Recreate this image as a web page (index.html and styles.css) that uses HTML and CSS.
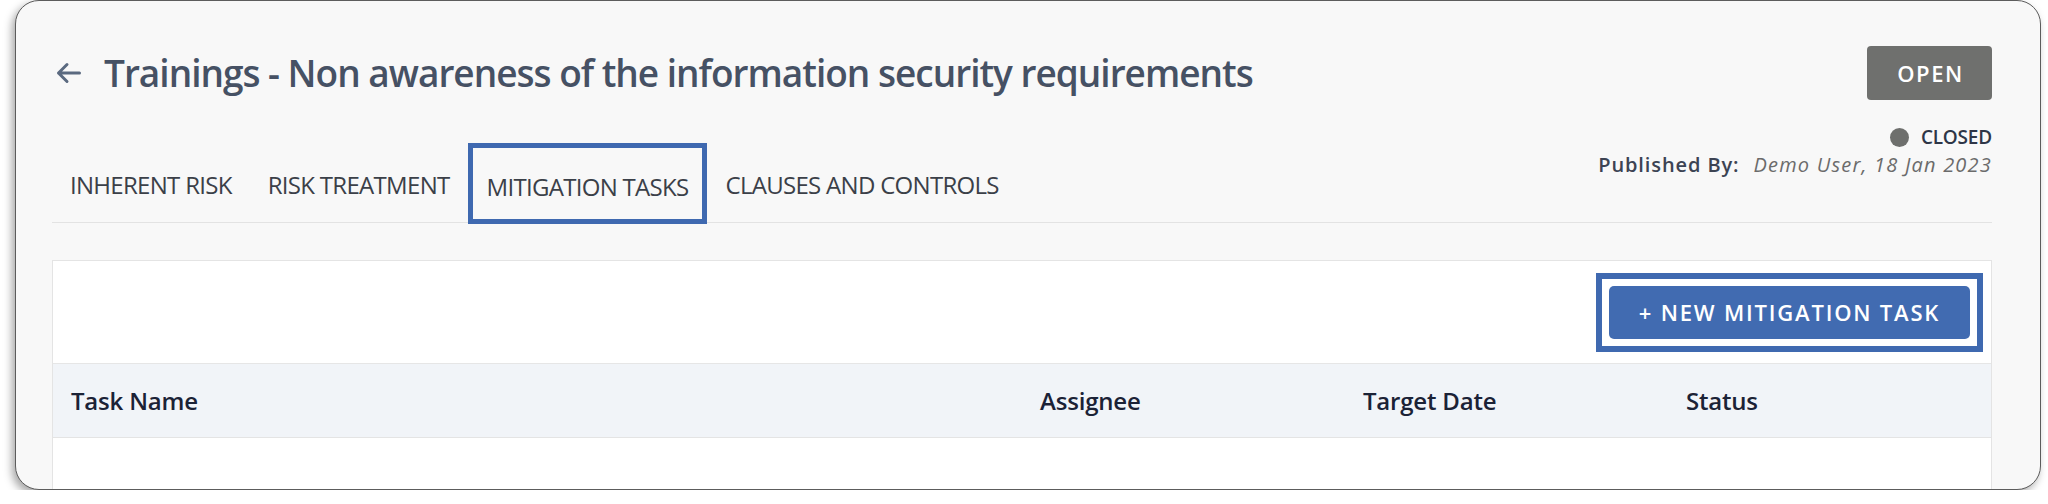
FILE: index.html
```html
<!DOCTYPE html>
<html lang="en">
<head>
<meta charset="utf-8">
<title>Risk - Mitigation Tasks</title>
<link rel="stylesheet" href="styles.css">
</head>
<body>
<div class="card">
  <header class="head">
    <div class="head-left">
      <div class="title-row">
        <svg class="back" viewBox="0 0 26 22" aria-hidden="true">
          <path d="M24.5 11H3.5M12 2.5L3.5 11L12 19.5" fill="none" stroke="currentColor" stroke-width="3" stroke-linecap="round" stroke-linejoin="round"/>
        </svg>
        <h1 class="title">Trainings - Non awareness of the information security requirements</h1>
      </div>
      <nav class="tabs">
        <div class="tab">INHERENT RISK</div>
        <div class="tab">RISK TREATMENT</div>
        <div class="tab tab-active">MITIGATION TASKS</div>
        <div class="tab">CLAUSES AND CONTROLS</div>
      </nav>
    </div>
    <div class="head-right">
      <button class="open-btn">OPEN</button>
      <div class="status"><span class="dot"></span><span class="status-text">CLOSED</span></div>
      <div class="published"><span class="pub-label">Published By:</span><span class="pub-value">Demo User, 18 Jan 2023</span></div>
    </div>
  </header>

  <section class="panel">
    <div class="toolbar">
      <div class="highlight">
        <button class="new-btn">+ NEW MITIGATION TASK</button>
      </div>
    </div>
    <div class="thead">
      <div class="th">Task Name</div>
      <div class="th">Assignee</div>
      <div class="th">Target Date</div>
      <div class="th">Status</div>
    </div>
    <div class="tbody"></div>
  </section>
</div>
</body>
</html>
```

FILE: styles.css
```css
html, body {
  margin: 0;
  padding: 0;
  background: #ffffff;
}

body {
  font-family: "Open Sans", "Noto Sans", "Liberation Sans", sans-serif;
}

.card {
  box-sizing: border-box;
  margin-left: 15px;
  width: 2026px;
  height: 490px;
  border: 1px solid #5c5c5c;
  border-radius: 24px;
  background: #f8f8f8;
  box-shadow: -3px 4px 8px rgba(0, 0, 0, 0.35);
  overflow: hidden;
  padding: 0 48px 0 36px;
}

.head {
  display: flex;
  justify-content: space-between;
  align-items: flex-start;
  border-bottom: 1px solid #e3e3e3;
}

.head-left {
  padding-top: 47px;
}

.title-row {
  display: flex;
  align-items: center;
  height: 50px;
}

.back {
  width: 26px;
  height: 22px;
  color: #5b6a80;
  margin-left: 3px;
  margin-right: 23px;
  flex: none;
}

.title {
  margin: 0;
  font-size: 37px;
  line-height: 50px;
  font-weight: 600;
  letter-spacing: -1px;
  color: #465164;
  white-space: nowrap;
}

.tabs {
  display: flex;
  height: 79px;
  margin-top: 45px;
}

.tab {
  box-sizing: border-box;
  display: flex;
  align-items: center;
  padding: 4px 18px 0;
  height: 79px;
  font-size: 24px;
  letter-spacing: -0.7px;
  color: #3b4048;
  white-space: nowrap;
}

.tab-active {
  height: 81px;
  margin-bottom: -2px;
  padding: 6px 14px 0;
  border: 5px solid #3f69b0;
}

.head-right {
  padding-top: 45px;
  display: flex;
  flex-direction: column;
  align-items: flex-end;
}

.open-btn {
  box-sizing: border-box;
  width: 125px;
  height: 54px;
  border: 0;
  border-radius: 4px;
  background: #6f706e;
  color: #ffffff;
  font-family: inherit;
  font-size: 22px;
  font-weight: 600;
  letter-spacing: 1.6px;
  padding: 0 0 0 2px;
}

.status {
  display: flex;
  align-items: center;
  margin-top: 25px;
  height: 24px;
}

.dot {
  width: 19px;
  height: 19px;
  border-radius: 50%;
  background: #6e6f6d;
  margin-right: 12px;
}

.status-text {
  font-size: 19px;
  font-weight: 600;
  line-height: 24px;
  color: #2e3647;
  letter-spacing: -0.2px;
}

.published {
  margin-top: 4px;
  display: flex;
  align-items: baseline;
  line-height: 24px;
}

.pub-label {
  font-size: 20px;
  font-weight: 600;
  letter-spacing: 0.9px;
  color: #3c4353;
  margin-right: 14px;
}

.pub-value {
  font-size: 20px;
  font-style: italic;
  letter-spacing: 1.2px;
  color: #6b6b6b;
}

.panel {
  margin-top: 37px;
  background: #ffffff;
  border: 1px solid #e4e4e4;
}

.toolbar {
  box-sizing: border-box;
  height: 103px;
  display: flex;
  justify-content: flex-end;
  align-items: center;
  padding-right: 8px;
  border-bottom: 1px solid #e6e6e6;
}

.highlight {
  border: 6px solid #3f69b0;
  padding: 7px;
  background: #ffffff;
}

.new-btn {
  display: block;
  box-sizing: border-box;
  width: 361px;
  height: 53px;
  border: 0;
  border-radius: 5px;
  background: #416bb1;
  color: #ffffff;
  font-family: inherit;
  font-size: 22px;
  font-weight: 600;
  letter-spacing: 1.8px;
  padding: 0;
}

.thead {
  display: grid;
  grid-template-columns: 3fr 1fr 1fr 1fr;
  height: 73px;
  background: #f1f4f8;
  border-bottom: 1px solid #e4e4e4;
}

.th {
  display: flex;
  align-items: center;
  padding: 0 18px;
  font-size: 24px;
  font-weight: 600;
  color: #1b2236;
  letter-spacing: -0.2px;
}

.tbody {
  height: 80px;
  background: #ffffff;
}
```
